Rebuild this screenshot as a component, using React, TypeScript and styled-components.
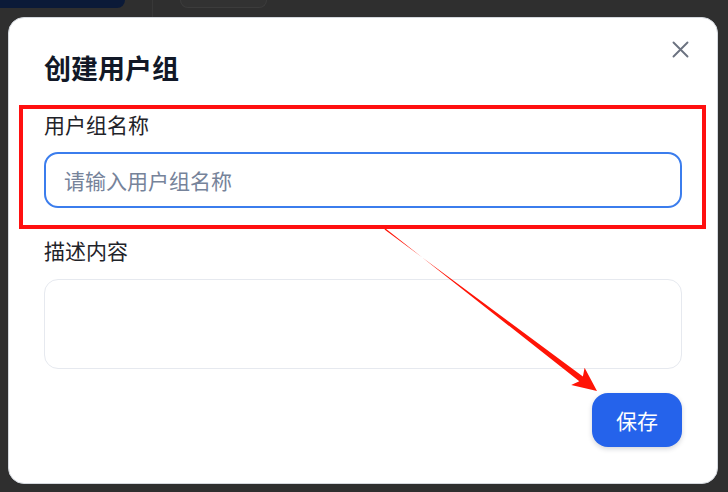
import styled, { createGlobalStyle } from "styled-components";

const GlobalStyle = createGlobalStyle`
  html, body {
    margin: 0;
    padding: 0;
    background: #2f2f2f;
  }
  body {
    font-family: "Noto Sans CJK SC", "Noto Sans", sans-serif;
  }
`;

export default function App() {
  return (
    <>
      <GlobalStyle />
      <Page>
        <TopStrip>
          <NavyTab />
          <Divider />
          <GhostTab />
        </TopStrip>
        <Dialog>
          <Header>
            <Title>创建用户组</Title>
            <CloseButton aria-label="关闭">
              <svg width="17" height="17" viewBox="0 0 17 17" fill="none">
                <path d="M1.5 1.5L15.5 15.5M15.5 1.5L1.5 15.5" stroke="#6b7280" strokeWidth="1.9" strokeLinecap="round" />
              </svg>
            </CloseButton>
          </Header>
          <Highlight>
            <Label>用户组名称</Label>
            <TextInput placeholder="请输入用户组名称" />
          </Highlight>
          <Label spaced>描述内容</Label>
          <TextArea />
          <Footer>
            <SaveButton>保存</SaveButton>
          </Footer>
        </Dialog>
        <ArrowLayer width="728" height="492" viewBox="0 0 728 492">
          <polygon
            points="384.5,229.5 582.9,376.5 584.6,367.7 597,391 571.2,385.1 579.3,381.3 385.5,228.5"
            fill="#ff1406"
          />
        </ArrowLayer>
      </Page>
    </>
  );
}

const Page = styled.div`
  position: relative;
  width: 728px;
  height: 492px;
  overflow: hidden;
  background: #2f2f2f;
`;

const TopStrip = styled.div`
  display: flex;
  align-items: flex-start;
  gap: 27px;
  height: 17px;
`;

const NavyTab = styled.div`
  width: 125px;
  height: 8px;
  background: #0b1a38;
  border-bottom-right-radius: 10px;
`;

const Divider = styled.div`
  width: 1px;
  height: 17px;
  background: #383838;
`;

const GhostTab = styled.div`
  width: 85px;
  height: 7px;
  background: #323232;
  border: 1px solid #3c3c3c;
  border-top: none;
  border-radius: 0 0 10px 10px;
`;

const Dialog = styled.div`
  box-sizing: border-box;
  margin-left: 8px;
  width: 710px;
  height: 467px;
  padding: 33px 35px 36px 35px;
  background: #ffffff;
  border: 1px solid #d4d8de;
  border-radius: 16px;
`;

const Header = styled.div`
  display: flex;
  justify-content: space-between;
  align-items: flex-start;
`;

const Title = styled.h2`
  margin: 0;
  font-size: 27px;
  line-height: 34px;
  font-weight: 700;
  color: #111827;
`;

const CloseButton = styled.button`
  display: flex;
  margin: -10px -7px 0 0;
  padding: 0;
  border: none;
  background: none;
  cursor: pointer;
`;

const Highlight = styled.div`
  margin: 20px -24px 0 -25px;
  padding: 0 20px 17px 21px;
  border: 4px solid #ff1010;
`;

const Label = styled.div<{ spaced?: boolean }>`
  margin-top: ${props => (props.spaced ? "6px" : "0")};
  font-size: 21px;
  line-height: 30px;
  color: #1f2329;
`;

const TextInput = styled.input`
  box-sizing: border-box;
  display: block;
  width: 100%;
  height: 56px;
  margin-top: 13px;
  padding: 0 18px;
  border: 2px solid #3b7ded;
  border-radius: 14px;
  font-family: inherit;
  font-size: 21px;
  color: #1f2329;
  outline: none;

  &::placeholder {
    color: #76839a;
  }
`;

const TextArea = styled.textarea`
  box-sizing: border-box;
  display: block;
  width: 638px;
  height: 90px;
  margin-top: 14px;
  padding: 12px 18px;
  border: 1px solid #e6e9ef;
  border-radius: 14px;
  font-family: inherit;
  font-size: 21px;
  resize: none;
  outline: none;
`;

const Footer = styled.div`
  display: flex;
  justify-content: flex-end;
  margin-top: 24px;
`;

const SaveButton = styled.button`
  width: 90px;
  height: 54px;
  border: none;
  border-radius: 16px;
  background: #2563eb;
  color: #ffffff;
  font-family: inherit;
  font-size: 21px;
  box-shadow: 0 2px 5px rgba(15, 23, 42, 0.18);
  cursor: pointer;
`;

const ArrowLayer = styled.svg`
  position: absolute;
  top: 0;
  left: 0;
  pointer-events: none;
`;
